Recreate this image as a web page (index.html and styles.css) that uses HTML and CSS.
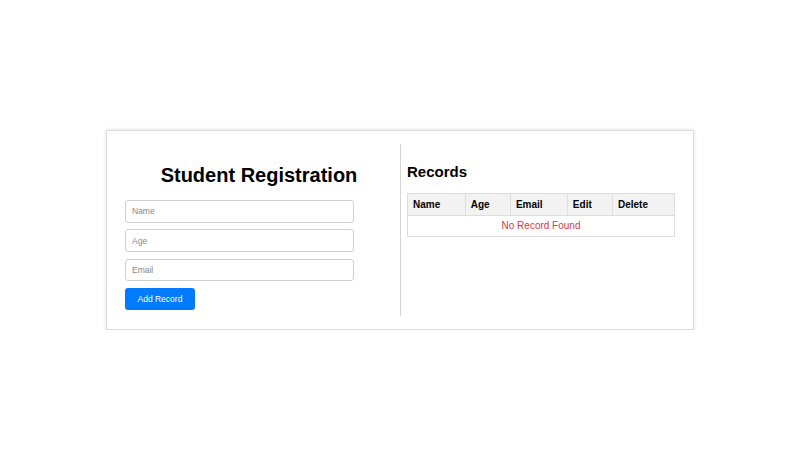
FILE: index.html
```html
<!DOCTYPE html>
<html lang="en">
<head>
<meta charset="utf-8">
<title>Student Registration</title>
<link rel="stylesheet" href="styles.css">
</head>
<body>
<div class="page">
  <div class="card">
    <div class="col col-form">
      <h2 class="title">Student Registration</h2>
      <form class="form">
        <input class="field" type="text" placeholder="Name">
        <input class="field" type="text" placeholder="Age">
        <input class="field" type="text" placeholder="Email">
        <button class="btn" type="button">Add Record</button>
      </form>
    </div>
    <div class="col col-records">
      <h3 class="records-title">Records</h3>
      <table class="table">
        <thead>
          <tr><th>Name</th><th>Age</th><th>Email</th><th>Edit</th><th>Delete</th></tr>
        </thead>
        <tbody>
          <tr><td class="empty" colspan="5">No Record Found</td></tr>
        </tbody>
      </table>
    </div>
  </div>
</div>
</body>
</html>
```

FILE: styles.css
```css
html, body {
  margin: 0;
  padding: 0;
  background: #ffffff;
  font-family: "Liberation Sans", Arial, sans-serif;
  color: #000;
}

.page {
  padding-top: 130px;
}

.card {
  width: 588px;
  box-sizing: border-box;
  margin: 0 auto;
  border: 1px solid #dcdcdc;
  box-shadow: 0 0 4px rgba(0, 0, 0, 0.12);
  padding: 13px 18px 13px 18px;
  display: flex;
  background: #fff;
}

.col {
  flex: 1;
  box-sizing: border-box;
}

.col-form {
  padding: 0 7px 6px 0;
  border-right: 1px solid #d4d4d4;
}

.col-records {
  padding-left: 6px;
}

.title {
  margin: 20px 0 13px;
  font-size: 20px;
  font-weight: bold;
  text-align: center;
  line-height: 23px;
}

.form {
  display: flex;
  flex-direction: column;
  align-items: flex-start;
}

.field {
  width: 229px;
  height: 22.7px;
  box-sizing: border-box;
  margin: 0 0 6.6px;
  padding: 0 6px;
  border: 1px solid #cfcfcf;
  border-radius: 3px;
  font-family: "Liberation Sans", Arial, sans-serif;
  font-size: 8.5px;
  color: #333;
  background: #fff;
  outline: none;
}

.field::placeholder {
  color: #888;
}

.btn {
  height: 21.7px;
  box-sizing: border-box;
  padding: 0 12.5px;
  border: none;
  border-radius: 3px;
  background: #007bff;
  color: #fff;
  font-family: "Liberation Sans", Arial, sans-serif;
  font-size: 8.5px;
  margin-top: 0.5px;
}

.records-title {
  margin: 18.5px 0 13px;
  font-size: 15px;
  line-height: 17px;
  font-weight: bold;
}

.table {
  width: 100%;
  border-collapse: collapse;
  font-size: 10px;
}

.table th,
.table td {
  border: 1px solid #dddddd;
  padding: 5px 5px;
  line-height: 11.5px;
}

.table th {
  background: #f2f2f2;
  text-align: left;
  font-weight: bold;
  padding-top: 5px;
  padding-bottom: 5px;
}

.table td.empty {
  text-align: center;
  color: #dc3545;
  padding-top: 4px;
  padding-bottom: 4px;
}
```
